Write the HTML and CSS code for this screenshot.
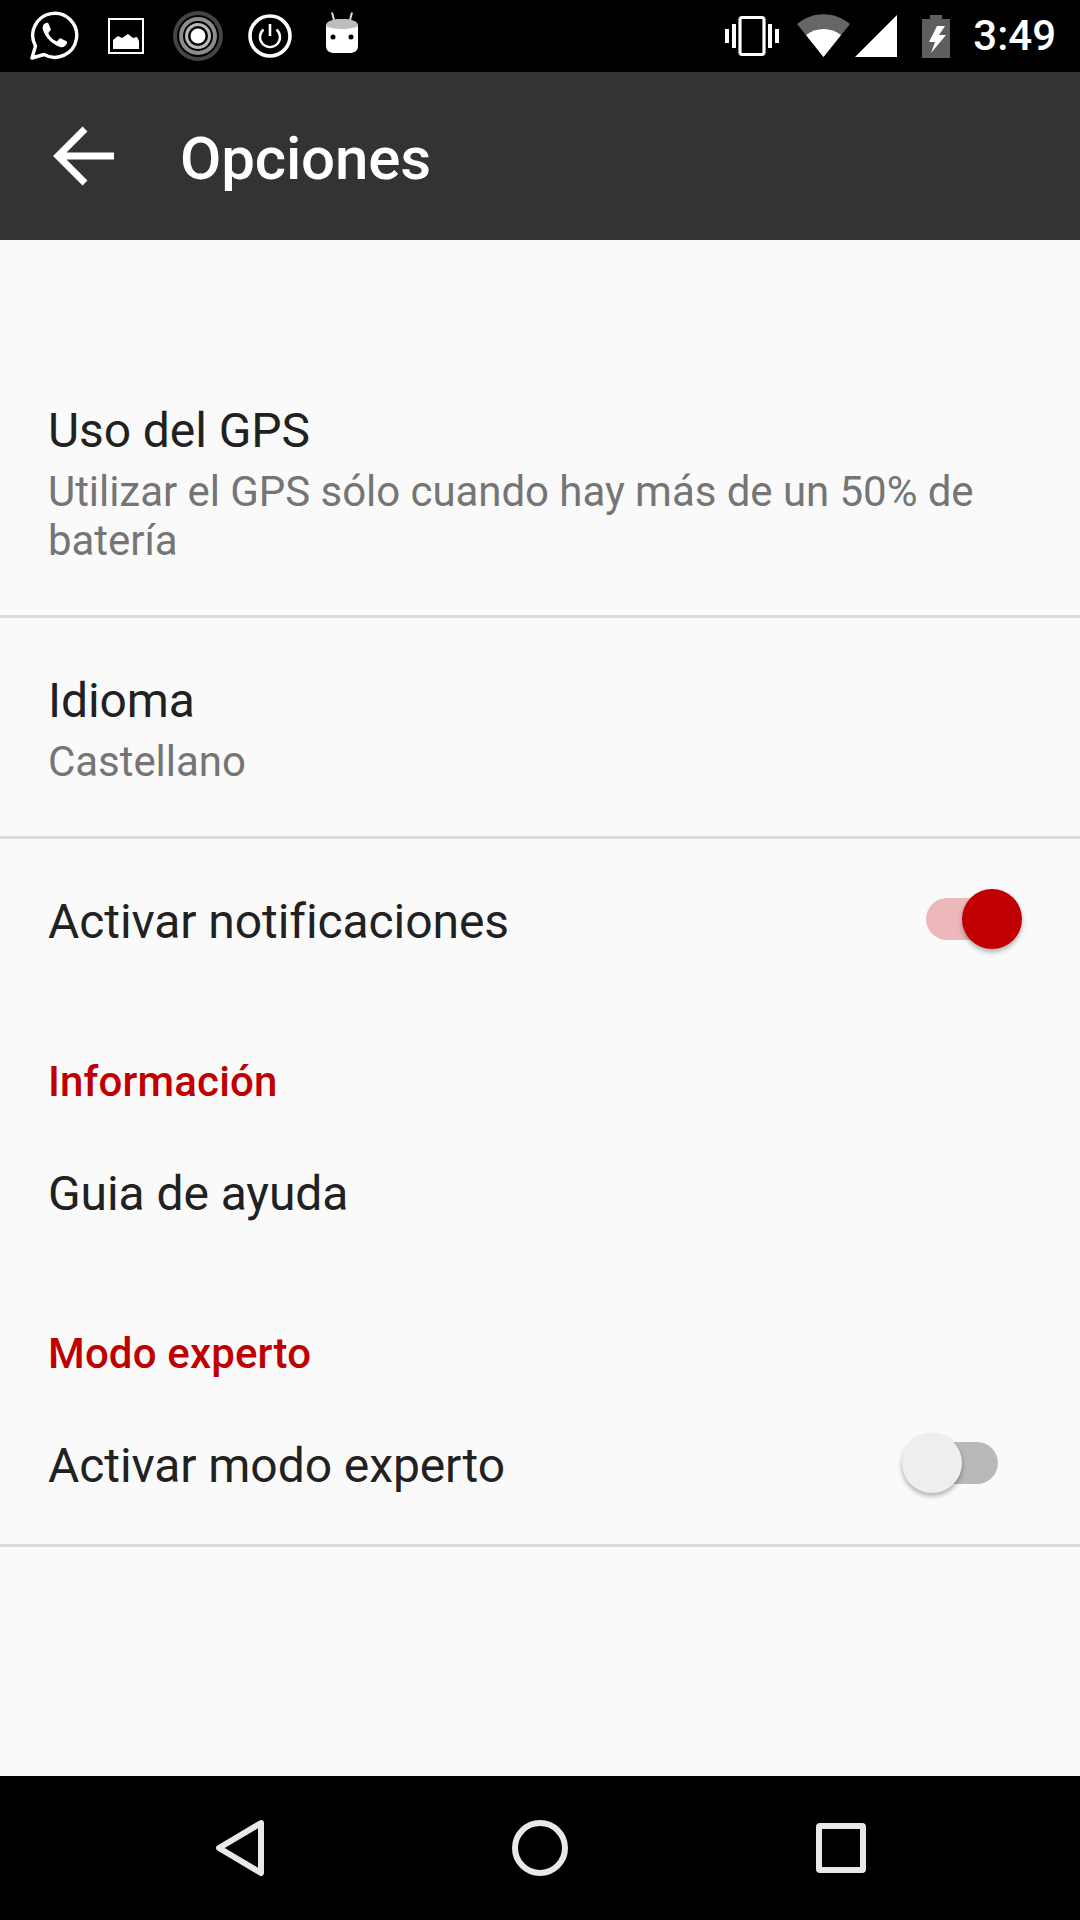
FILE: index.html
```html
<!DOCTYPE html>
<html>
<head>
<meta charset="utf-8">
<title>Opciones</title>
<link rel="stylesheet" href="styles.css">
</head>
<body>
<div class="screen">

	<!-- status bar -->
	<div class="status-bar">
		<div class="status-left">
			<svg class="ic-whatsapp" width="50" height="50" viewBox="0 0 50 50">
				<path d="M3 47 L6.5 35 A22 22 0 1 1 15 43.5 Z" fill="none" stroke="#fff" stroke-width="3.4" stroke-linejoin="round"/>
				<path d="M17 12 C14 13 13 16 14 19 C16 26 23 33 31 36 C34 37 37 35 38 32 C38 31 38 30 37 30 L32 27.500 C31 27 30.500 27.500 30 28 L28.500 30 C28 30.500 27.500 30.500 27 30 C23.500 28.500 21 26 19.500 22.500 C19.500 22 19.500 21.500 20 21 L21.500 19.500 C22 19 22 18.500 21.500 17.500 L19.500 12.500 C19 11.500 18 11.500 17 12 Z" fill="#fff"/>
			</svg>
			<svg class="ic-image" width="36" height="36" viewBox="0 0 36 36">
				<rect x="1" y="1" width="34" height="34" fill="none" stroke="#fff" stroke-width="2"/>
				<path d="M5 31 V22 L10 18 L14 20 L20 16 L25 20 L29 19 L31 23 V31 Z" fill="#fff"/>
			</svg>
			<svg class="ic-rings" width="50" height="50" viewBox="0 0 50 50">
				<circle cx="25" cy="25" r="25" fill="#444"/>
				<circle cx="25" cy="25" r="21" fill="#000"/>
				<circle cx="25" cy="25" r="19" fill="#8c8c8c"/>
				<circle cx="25" cy="25" r="15" fill="#000"/>
				<circle cx="25" cy="25" r="13" fill="#b8b8b8"/>
				<circle cx="25" cy="25" r="10" fill="#000"/>
				<circle cx="25" cy="25" r="7.500" fill="#fff"/>
			</svg>
			<svg class="ic-power" width="44" height="44" viewBox="0 0 44 44">
				<circle cx="22" cy="22" r="20" fill="none" stroke="#fff" stroke-width="3.600"/>
				<path d="M15.500 15.500 A10 10 0 1 0 28.500 15.500" fill="none" stroke="#fff" stroke-width="2.400"/>
				<path d="M22 10 V22" stroke="#fff" stroke-width="2.600"/>
			</svg>
			<svg class="ic-android" width="34" height="42" viewBox="0 0 34 42">
				<path d="M7 0.500 L9 8 M27 0.500 L25 8" stroke="#ddd" stroke-width="2"/>
				<path d="M1 14 C1 9 9 7 17 7 C25 7 33 9 33 14 L33 34 C33 39 29 41 25 41 L9 41 C5 41 1 39 1 34 Z" fill="#fff"/>
				<path d="M1 14 C1 9 9 7 17 7 C25 7 33 9 33 14 C27 18 7 18 1 14 Z" fill="#bdbdbd"/>
				<circle cx="8" cy="25" r="2.500" fill="#000"/>
				<circle cx="26" cy="25" r="2.500" fill="#000"/>
			</svg>
		</div>
		<div class="status-right">
			<svg class="ic-vibrate" width="54" height="40" viewBox="0 0 54 40">
				<rect x="15" y="1.500" width="24" height="37" rx="2.500" fill="none" stroke="#fff" stroke-width="3.200"/>
				<rect x="0" y="13" width="4" height="14" fill="#fff"/>
				<rect x="7" y="8" width="4" height="24" fill="#fff"/>
				<rect x="43" y="8" width="4" height="24" fill="#fff"/>
				<rect x="50" y="13" width="4" height="14" fill="#fff"/>
			</svg>
			<svg class="ic-wifi" width="53" height="43" viewBox="0 0 53 43">
				<path d="M0 10 C16 -3 37 -3 53 10 L26.500 43 Z" fill="#666"/>
				<path d="M9 21 C19 13 34 13 44 21 L26.500 43 Z" fill="#fff"/>
			</svg>
			<svg class="ic-signal" width="42" height="42" viewBox="0 0 42 42">
				<path d="M0 42 L42 0 V42 Z" fill="#fff"/>
			</svg>
			<svg class="ic-battery" width="28" height="43" viewBox="0 0 28 43">
				<path d="M8 0 H20 V4 H28 V43 H0 V4 H8 Z" fill="#5e5e5e"/>
				<path d="M15 11 L7 27 H13 L9 38 L24 20 H17 L23 11 Z" fill="#fff"/>
			</svg>
			<span class="clock">3:49</span>
		</div>
	</div>

	<!-- app bar -->
	<div class="app-bar">
		<svg class="ic-back" width="62" height="60" viewBox="0 0 62 60">
			<path d="M32 3 L5 30 L32 57 M5 30 H61" fill="none" stroke="#fff" stroke-width="7"/>
		</svg>
		<div class="app-title">Opciones</div>
	</div>

	<!-- settings list -->
	<div class="content">
		<div class="pref divider">
			<div class="pref-title">Uso del GPS</div>
			<div class="pref-sub">Utilizar el GPS sólo cuando hay más de un 50% de batería</div>
		</div>
		<div class="pref divider second">
			<div class="pref-title">Idioma</div>
			<div class="pref-sub">Castellano</div>
		</div>
		<div class="pref switch-row">
			<div class="pref-title">Activar notificaciones</div>
			<div class="switch on"><div class="thumb"></div></div>
		</div>
		<div class="section">Información</div>
		<div class="pref under-section">
			<div class="pref-title">Guia de ayuda</div>
		</div>
		<div class="section">Modo experto</div>
		<div class="pref under-section switch-row divider last">
			<div class="pref-title">Activar modo experto</div>
			<div class="switch"><div class="thumb"></div></div>
		</div>
	</div>

	<!-- nav bar -->
	<div class="nav-bar">
		<svg class="nav-back" width="52" height="58" viewBox="0 0 52 58">
			<path d="M47 4 L5 29 L47 54 Z" fill="none" stroke="#e8e8e8" stroke-width="6" stroke-linejoin="round"/>
		</svg>
		<svg class="nav-home" width="56" height="56" viewBox="0 0 56 56">
			<circle cx="28" cy="28" r="25" fill="none" stroke="#e8e8e8" stroke-width="6"/>
		</svg>
		<svg class="nav-recent" width="50" height="50" viewBox="0 0 50 50">
			<rect x="3" y="3" width="44" height="44" rx="1" fill="none" stroke="#e8e8e8" stroke-width="6"/>
		</svg>
	</div>
</div>
</body>
</html>
```
FILE: styles.css
```css
html, body {
	margin: 0;
	padding: 0;
}
body {
	background-color: #000;
	font-family: Roboto, "Liberation Sans", sans-serif;
}
.screen {
	width: 1080px;
	height: 1920px;
	display: flex;
	flex-direction: column;
	overflow: hidden;
}

.status-bar {
	height: 72px;
	flex: none;
	background-color: #000;
	display: flex;
	justify-content: space-between;
	align-items: center;
	padding: 0 24px 0 29px;
}
.status-left, .status-right {
	display: flex;
	align-items: center;
}
.ic-image { margin-left: 29px; }
.ic-rings { margin-left: 29px; }
.ic-power { margin-left: 25px; }
.ic-android { margin-left: 33px; margin-top: -6px; }
.ic-wifi { margin-left: 18px; margin-top: -2px; }
.ic-signal { margin-left: 5px; }
.ic-battery { margin-left: 25px; }
.clock {
	margin-left: 23px;
	color: #fff;
	font-size: 42px;
	font-weight: 500;
	line-height: 72px;
}

.app-bar {
	height: 168px;
	flex: none;
	background-color: #333;
	display: flex;
	align-items: center;
	padding-left: 53px;
}
.app-title {
	margin-left: 65px;
	margin-top: 5px;
	color: #fff;
	font-size: 60px;
	font-weight: 500;
	letter-spacing: -0.15px;
	line-height: 72px;
}

.content {
	flex: 1;
	background-color: #fafafa;
	padding-top: 109px;
}
.pref {
	padding: 52px 48px 50px;
}
.pref.divider {
	border-bottom: 3px solid #dcdcdc;
}
.pref.second {
	padding-top: 53px;
}
.pref.switch-row {
	padding-top: 53px;
	padding-bottom: 49px;
	padding-right: 82px;
}
.pref.under-section {
	padding-top: 58px;
	padding-bottom: 49px;
}
.pref.last {
	padding-bottom: 48px;
}
.pref-title {
	color: #212121;
	font-size: 48px;
	letter-spacing: -0.08px;
	line-height: 60px;
}
.pref-sub {
	margin-top: 6px;
	color: #757575;
	font-size: 42px;
	letter-spacing: -0.05px;
	line-height: 49px;
}
.switch-row {
	display: flex;
	justify-content: space-between;
	align-items: center;
}
.switch {
	width: 72px;
	height: 42px;
	margin-top: -6px;
	border-radius: 21px;
	background-color: #b9b9b9;
	position: relative;
}
.switch .thumb {
	width: 60px;
	height: 60px;
	border-radius: 50%;
	background-color: #eeeeee;
	position: absolute;
	top: -9px;
	left: -24px;
	box-shadow: 0 3px 5px rgba(0, 0, 0, 0.3);
}
.switch.on {
	background-color: #ecb8bc;
}
.switch.on .thumb {
	background-color: #c00000;
	left: 36px;
}
.section {
	padding: 56px 48px 0;
	color: #c00000;
	font-size: 42px;
	font-weight: 500;
	letter-spacing: 0.15px;
	line-height: 49px;
}

.nav-bar {
	height: 144px;
	flex: none;
	background-color: #000;
	display: flex;
	align-items: center;
	padding-left: 214px;
}
.nav-home { margin-left: 246px; }
.nav-recent { margin-left: 248px; }
```
